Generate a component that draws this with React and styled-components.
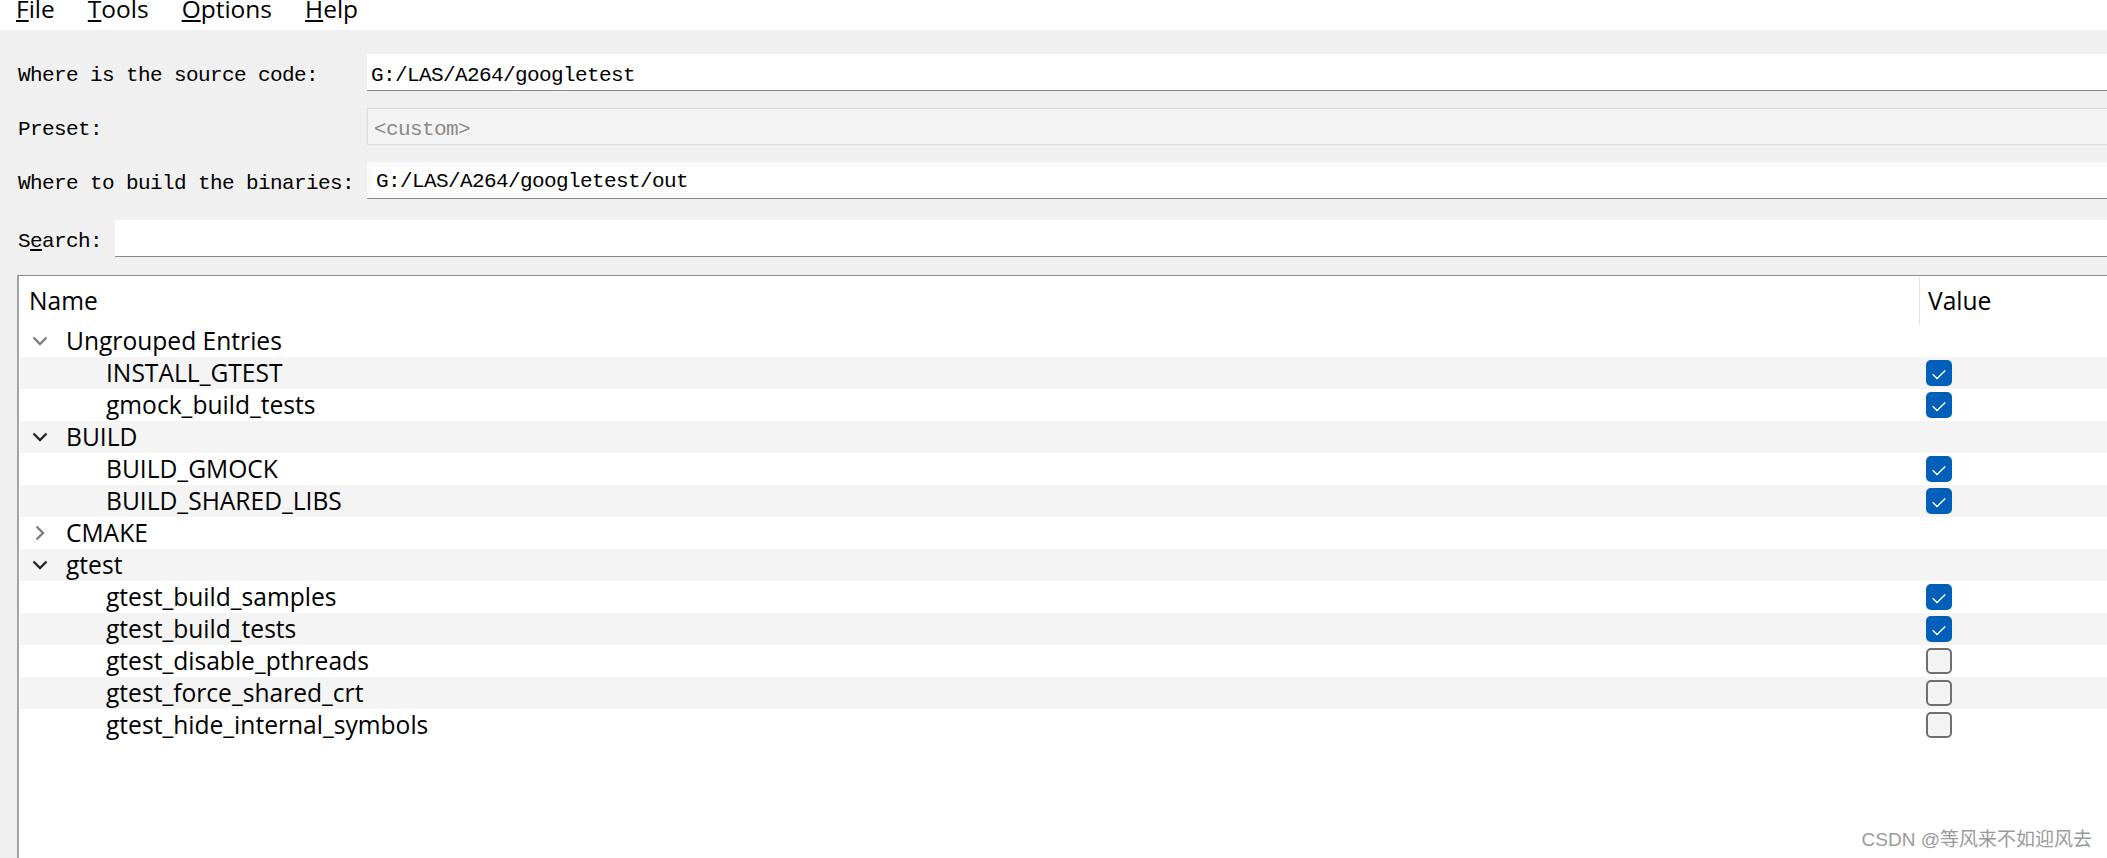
import React from "react";
import styled, { createGlobalStyle } from "styled-components";

const GlobalStyle = createGlobalStyle`
  html, body, #root { height: 100%; }
  body {
    margin: 0;
    overflow: hidden;
    background: #f0f0f0;
    font-family: "Open Sans", "Noto Sans", sans-serif;
    color: #000;
  }
`;

const MONO = `"Liberation Mono", "DejaVu Sans Mono", monospace`;

const Page = styled.div`
  position: relative;
  height: 100vh;
  display: flex;
  flex-direction: column;
`;

/* ---------- menu ---------- */
const MenuBar = styled.div`
  height: 30px;
  flex: none;
  background: #fff;
  display: flex;
  align-items: flex-start;
  gap: 33px;
  padding-left: 16px;
  overflow: hidden;
`;
const MenuItem = styled.div`
  margin-top: -3px;
  font-size: 24.5px;
  line-height: 24px;
  white-space: nowrap;
`;
const Key = styled.span`
  text-decoration: underline;
  text-decoration-thickness: 2px;
  text-underline-offset: 2px;
`;

/* ---------- form ---------- */
const Form = styled.div`
  flex: none;
  padding: 24px 0 0 18px;
  display: grid;
  grid-template-columns: 349px 1fr;
  row-gap: 17px;
  align-items: stretch;
`;
const Label = styled.div`
  font-family: ${MONO};
  font-size: 21px;
  letter-spacing: -0.6px;
  display: flex;
  align-items: center;
  padding-top: 6px;
  white-space: nowrap;
`;
const Field = styled.div`
  height: 37px;
  box-sizing: border-box;
  display: flex;
  align-items: center;
  padding: 6px 0 0 ${(p) => (p.$disabled ? 6 : 4)}px;
  background: ${(p) => (p.$disabled ? "#f3f3f3" : p.$framed ? "#fafafa" : "#fff")};
  border: ${(p) => (p.$disabled ? "1px solid #dadada" : "none")};
  border-bottom: 1px solid ${(p) => (p.$disabled ? "#dadada" : "#878787")};
  border-right: none;
  color: ${(p) => (p.$disabled ? "#8a8a8a" : "#000")};
  font-family: ${MONO};
  font-size: 21px;
  letter-spacing: -0.6px;
  white-space: nowrap;
  ${(p) => p.$framed && `padding: 5px 0 5px 6px;`}
`;
const FieldInner = styled.div`
  flex: 1;
  align-self: stretch;
  background: #fff;
  display: flex;
  align-items: center;
  padding: 3px 0 0 3px;
`;
const SearchRow = styled.div`
  flex: none;
  margin-top: 21px;
  padding-left: 18px;
  display: flex;
  height: 37px;
`;
const SearchLabel = styled(Label)`
  width: 97px;
  flex: none;
`;
const SearchInput = styled.div`
  flex: 1;
  background: #fff;
  border-bottom: 1px solid #878787;
`;

/* ---------- tree ---------- */
const Tree = styled.div`
  flex: 1;
  margin: 18px 0 0 17px;
  background: #fff;
  border-top: 1px solid #8c8c8c;
  border-left: 2px solid #a3a3a3;
  padding-left: 1px;
  font-size: 24.6px;
  overflow: hidden;
`;
const HeaderRow = styled.div`
  display: grid;
  grid-template-columns: 1899px 1fr;
  height: 49px;
  line-height: 49px;
`;
const HeaderCell = styled.div`
  padding-left: ${(p) => (p.$value ? 8 : 9)}px;
  ${(p) => p.$value && `border-left: 1px solid #e3e3e3; margin-top: 1px; line-height: 48px;`}
  white-space: nowrap;
`;
const TreeRow = styled.div`
  display: grid;
  grid-template-columns: 1899px 1fr;
  height: 32px;
  align-items: center;
  background: ${(p) => (p.$alt ? "#f4f4f4" : "#fff")};
`;
const NameCell = styled.div`
  display: flex;
  align-items: center;
  gap: 18px;
  padding-left: ${(p) => (p.$child ? 86 : 12)}px;
  line-height: 32px;
  white-space: nowrap;
`;
const ValueCell = styled.div`
  display: flex;
  align-items: center;
  padding-left: 7px;
`;
const Chevron = styled.svg`
  width: 16px;
  height: 16px;
  flex: none;
  color: ${(p) => (p.$dim ? "#7d7d7d" : "#262626")};
`;
const Box = styled.div`
  width: 26px;
  height: 26px;
  box-sizing: border-box;
  border-radius: 5px;
  display: flex;
  align-items: center;
  justify-content: center;
  background: ${(p) => (p.$on ? "#005fb8" : "#f3f3f3")};
  border: ${(p) => (p.$on ? "none" : "2px solid #6f6f6f")};
`;

const Watermark = styled.div`
  position: absolute;
  right: 15px;
  bottom: 9px;
  font-family: "Liberation Sans", "Noto Sans CJK SC", sans-serif;
  font-size: 19px;
  line-height: 19px;
  color: #9a9a9a;
  text-shadow: 0 0 1px #fff;
  white-space: nowrap;
`;

function ChevronIcon({ open, dim }) {
  return (
    <Chevron viewBox="0 0 16 16" $dim={dim}>
      {open ? (
        <path d="M1.5 4.5 L8 11 L14.5 4.5" fill="none" stroke="currentColor" strokeWidth="2.4" />
      ) : (
        <path d="M4.5 1.5 L11 8 L4.5 14.5" fill="none" stroke="currentColor" strokeWidth="2.4" />
      )}
    </Chevron>
  );
}

function CheckBox({ on }) {
  return (
    <Box $on={on}>
      {on && (
        <svg width="26" height="26" viewBox="0 0 26 26">
          <path d="M6.7 14.2 L11 18.6 L19.3 10.4" fill="none" stroke="#fff" strokeWidth="1.4" />
        </svg>
      )}
    </Box>
  );
}

const groups = [
  { name: "Ungrouped Entries", open: true, dim: true, items: [["INSTALL_GTEST", true], ["gmock_build_tests", true]] },
  { name: "BUILD", open: true, items: [["BUILD_GMOCK", true], ["BUILD_SHARED_LIBS", true]] },
  { name: "CMAKE", open: false, dim: true, items: [] },
  {
    name: "gtest",
    open: true,
    items: [
      ["gtest_build_samples", true],
      ["gtest_build_tests", true],
      ["gtest_disable_pthreads", false],
      ["gtest_force_shared_crt", false],
      ["gtest_hide_internal_symbols", false],
    ],
  },
];

const menus = [
  ["F", "ile"],
  ["T", "ools"],
  ["O", "ptions"],
  ["H", "elp"],
];

export default function App() {
  const rows = [];
  groups.forEach((g) => {
    rows.push({ group: true, ...g });
    g.items.forEach(([n, v]) => rows.push({ group: false, name: n, value: v }));
  });

  return (
    <Page>
      <GlobalStyle />
      <MenuBar>
        {menus.map(([k, rest]) => (
          <MenuItem key={k}>
            <Key>{k}</Key>
            {rest}
          </MenuItem>
        ))}
      </MenuBar>

      <Form>
        <Label>Where is the source code:</Label>
        <Field>G:/LAS/A264/googletest</Field>
        <Label>Preset:</Label>
        <Field $disabled>&lt;custom&gt;</Field>
        <Label>Where to build the binaries:</Label>
        <Field $framed>
          <FieldInner>G:/LAS/A264/googletest/out</FieldInner>
        </Field>
      </Form>

      <SearchRow>
        <SearchLabel>
          S<Key>e</Key>arch:
        </SearchLabel>
        <SearchInput />
      </SearchRow>

      <Tree>
        <HeaderRow>
          <HeaderCell>Name</HeaderCell>
          <HeaderCell $value>Value</HeaderCell>
        </HeaderRow>
        {rows.map((r, i) => (
          <TreeRow key={i} $alt={i % 2 === 1}>
            <NameCell $child={!r.group}>
              {r.group && <ChevronIcon open={r.open} dim={r.dim} />}
              {r.name}
            </NameCell>
            <ValueCell>{!r.group && <CheckBox on={r.value} />}</ValueCell>
          </TreeRow>
        ))}
      </Tree>

      <Watermark>CSDN @等风来不如迎风去</Watermark>
    </Page>
  );
}
